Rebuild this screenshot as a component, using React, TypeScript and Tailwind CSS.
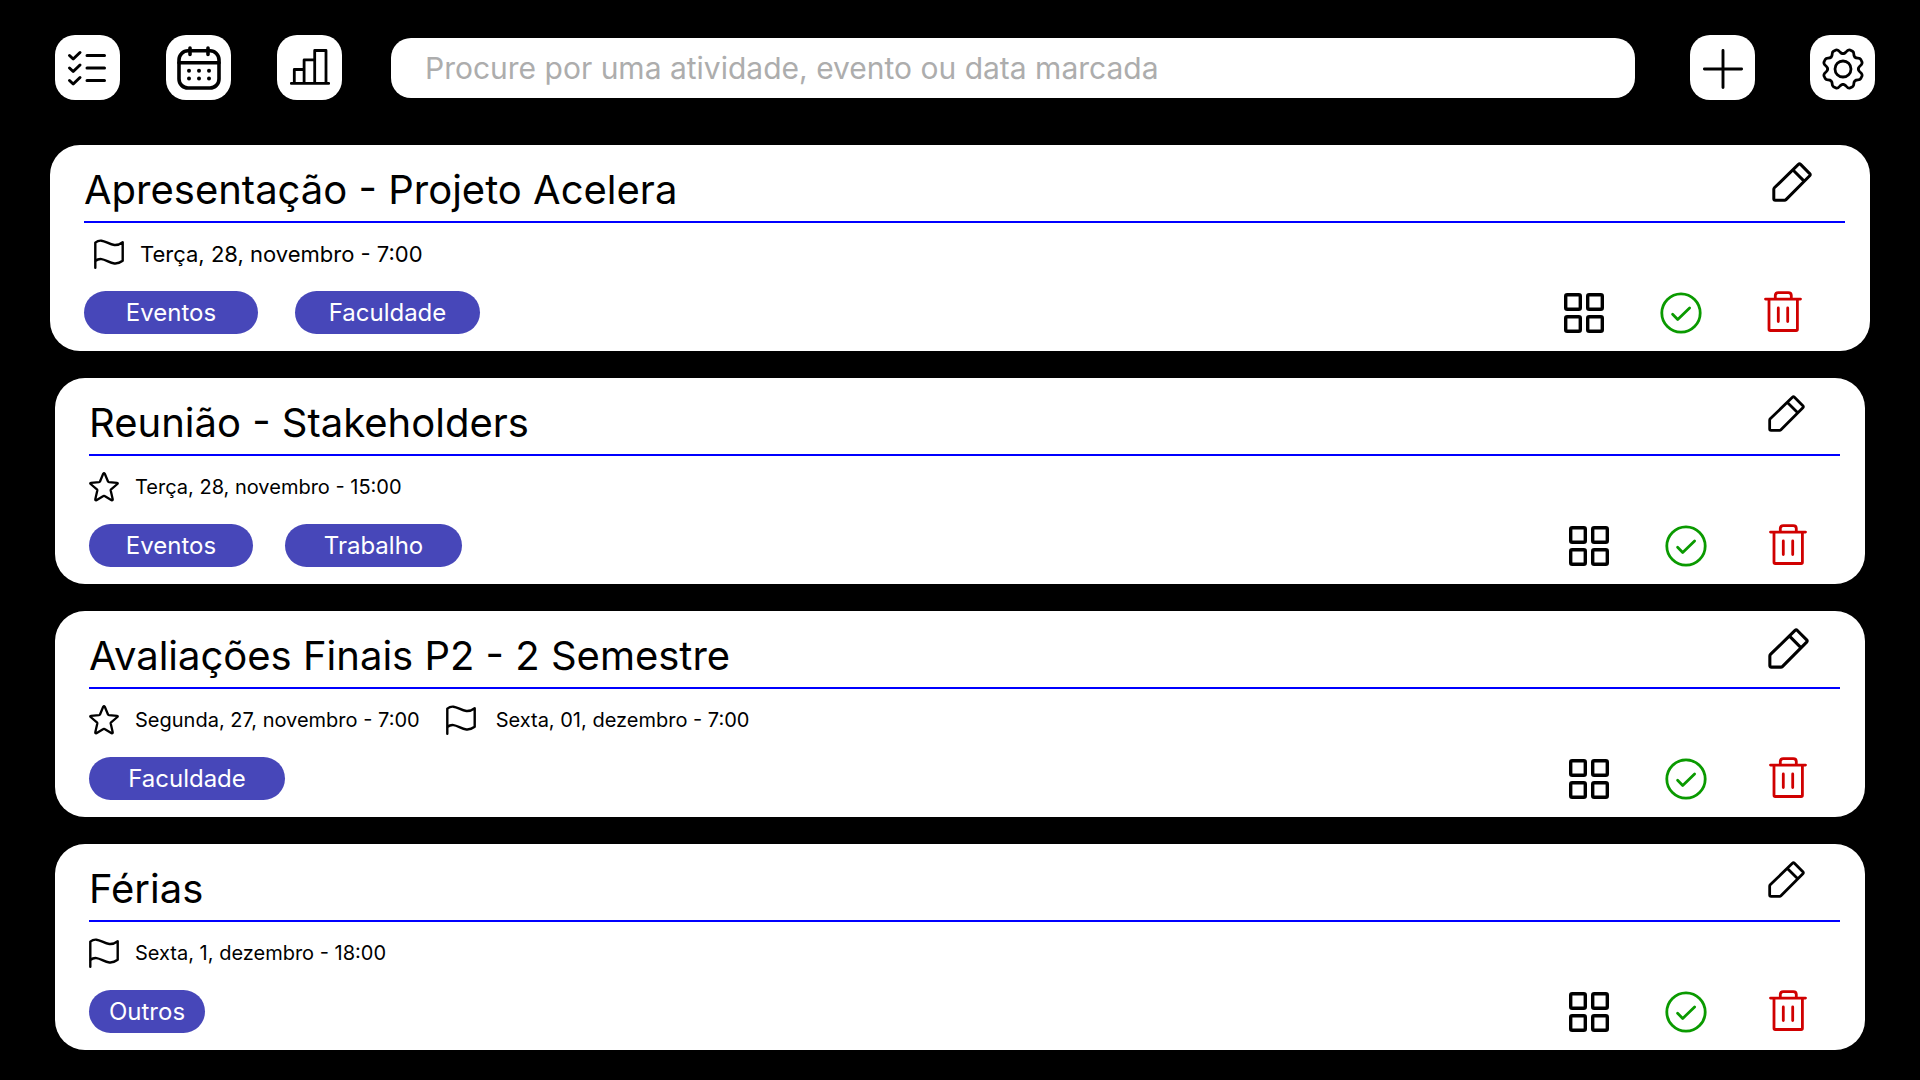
import React from "react";

type Tag = { label: string; width: string };
type Moment = { kind: "flag" | "star"; text: string; gap: string };
type Task = {
  title: string;
  moments: Moment[];
  tags: Tag[];
  cardClass: string;
  dateClass: string;
  momentsClass: string;
  tagsClass: string;
  pencilClass: string;
  actionsClass: string;
};

const tasks: Task[] = [
  {
    title: "Apresentação - Projeto Acelera",
    moments: [{ kind: "flag", text: "Terça, 28, novembro - 7:00", gap: "gap-4" }],
    tags: [
      { label: "Eventos", width: "w-[174px]" },
      { label: "Faculdade", width: "w-[185px]" },
    ],
    cardClass: "",
    dateClass: "text-[22px]",
    momentsClass: "pl-[10px]",
    tagsClass: "gap-[37px]",
    pencilClass: "size-[40px] mr-[33px]",
    actionsClass: "mr-[37px]",
  },
  {
    title: "Reunião - Stakeholders",
    moments: [{ kind: "star", text: "Terça, 28, novembro - 15:00", gap: "gap-4" }],
    tags: [
      { label: "Eventos", width: "w-[164px]" },
      { label: "Trabalho", width: "w-[177px]" },
    ],
    cardClass: "mx-[5px]",
    dateClass: "text-[20px]",
    momentsClass: "",
    tagsClass: "gap-8",
    pencilClass: "size-[37px] mr-[35px]",
    actionsClass: "mr-[27px]",
  },
  {
    title: "Avaliações Finais P2 - 2 Semestre",
    moments: [
      { kind: "star", text: "Segunda, 27, novembro - 7:00", gap: "gap-4" },
      { kind: "flag", text: "Sexta, 01, dezembro - 7:00", gap: "gap-5" },
    ],
    tags: [{ label: "Faculdade", width: "w-[196px]" }],
    cardClass: "mx-[5px]",
    dateClass: "text-[20px]",
    momentsClass: "",
    tagsClass: "gap-8",
    pencilClass: "size-[41px] mr-[31px]",
    actionsClass: "mr-[27px]",
  },
  {
    title: "Férias",
    moments: [{ kind: "flag", text: "Sexta, 1, dezembro - 18:00", gap: "gap-4" }],
    tags: [{ label: "Outros", width: "w-[116px]" }],
    cardClass: "mx-[5px]",
    dateClass: "text-[20px]",
    momentsClass: "",
    tagsClass: "gap-8",
    pencilClass: "size-[37px] mr-[35px]",
    actionsClass: "mr-[27px]",
  },
];

const stroke = {
  fill: "none",
  stroke: "currentColor",
  strokeLinecap: "round" as const,
  strokeLinejoin: "round" as const,
  "aria-hidden": true,
};

function ChecklistIcon() {
  return (
    <svg viewBox="0 0 65 65" className="size-full" strokeWidth={3} {...stroke}>
      <path d="M14.5 20.5l3.7 3.5 6.8-6.5M14.5 33l3.7 3.5 6.8-6.5M14.5 45.5l3.7 3.5 6.8-6.5" />
      <path d="M32 20.5h17.5M32 33h17.5M32 45.5h17.5" />
    </svg>
  );
}

function CalendarIcon() {
  return (
    <svg viewBox="0 0 65 65" className="size-full" strokeWidth={3.6} {...stroke}>
      <rect x="13" y="15.8" width="40" height="37.2" rx="9" />
      <path d="M13 27.7h40M24 13v6.5M42 13v6.5" />
      <g fill="currentColor" stroke="none">
        <circle cx="23" cy="35.7" r="2" />
        <circle cx="33" cy="35.7" r="2" />
        <circle cx="43" cy="35.7" r="2" />
        <circle cx="23" cy="43.4" r="2" />
        <circle cx="33" cy="43.4" r="2" />
        <circle cx="43" cy="43.4" r="2" />
      </g>
    </svg>
  );
}

function ChartIcon() {
  return (
    <svg viewBox="0 0 65 65" className="size-full" strokeWidth={2.8} {...stroke}>
      <path d="M14.3 48.4h37.4M17.3 48.4V34.5h9.8M27.1 48.4V24.9h10.6M37.7 48.4V15.5H49v32.9" />
    </svg>
  );
}

function PlusIcon() {
  return (
    <svg viewBox="0 0 65 65" className="size-full" strokeWidth={2.9} {...stroke}>
      <path d="M14.4 34h37.2M33 15.4v37.2" />
    </svg>
  );
}

const gearQuarter =
  "M0-15.3Q1.5-15.3 3-17Q5-19.6 7-19L9.5-17.8Q10.8-17 10.8-15Q10.8-10.8 15-10.8Q17-10.8 17.8-9.5L19-7Q19.6-5 17-3Q15.3-1.5 15.3 0";

function GearIcon() {
  return (
    <svg viewBox="0 0 65 65" className="size-full" strokeWidth={2.8} {...stroke}>
      <g transform="translate(33 34)">
        <circle r="8" />
        <path d={gearQuarter} />
        <path d={gearQuarter} transform="rotate(90)" />
        <path d={gearQuarter} transform="rotate(180)" />
        <path d={gearQuarter} transform="rotate(270)" />
      </g>
    </svg>
  );
}

function PencilIcon() {
  return (
    <svg viewBox="0 0 40 40" className="size-full" strokeWidth={3} {...stroke}>
      <path d="M1.8 27.2v9.5q0 1.5 1.5 1.5h9.3q.8 0 1.4-.6l23.7-23.8q1-1.1 0-2.2L28.6 2.4q-1.1-1-2.2 0L2.4 25.8q-.6.6-.6 1.4zM21 8l10.6 10.6" />
    </svg>
  );
}

function FlagIcon() {
  return (
    <svg viewBox="0 0 30 30" className="size-[30px] shrink-0" strokeWidth={2.4} {...stroke}>
      <path d="M1.3 28.8V3.6C10.5-3.6 17 12 28.7 3.2v18.6C17 30.5 10.5 14.8 1.3 22" />
    </svg>
  );
}

function StarIcon() {
  return (
    <svg viewBox="0 0 30 30" className="size-[30px] shrink-0" strokeWidth={2.3} {...stroke}>
      <path d="M15.8 1.8l3.2 7.7q.2.6.9.6l8.1.7q1.3.2.4 1.2l-6.3 5.4q-.5.5-.4 1.1l2 8.8q.1 1.4-1.1.9L15.6 24q-.6-.4-1.2 0l-7 4.2q-1.2.5-1.1-.9l2-8.8q.1-.6-.4-1.1L1.6 12q-.9-1 .4-1.2l8.1-.7q.7 0 .9-.6l3.2-7.7q.8-1.2 1.6 0z" />
    </svg>
  );
}

function GridIcon() {
  return (
    <svg viewBox="0 0 40 40" className="size-10" strokeWidth={3.4} {...stroke}>
      <rect x="1.7" y="1.7" width="14.6" height="14.6" rx="1.5" />
      <rect x="23.7" y="1.7" width="14.6" height="14.6" rx="1.5" />
      <rect x="1.7" y="23.7" width="14.6" height="14.6" rx="1.5" />
      <rect x="23.7" y="23.7" width="14.6" height="14.6" rx="1.5" />
    </svg>
  );
}

function DoneIcon() {
  return (
    <svg viewBox="0 0 42 42" className="size-[42px]" strokeWidth={2.8} {...stroke}>
      <circle cx="21" cy="21" r="19.2" />
      <path d="M12.6 22.3l5.1 5.1L29.6 16" />
    </svg>
  );
}

function TrashIcon() {
  return (
    <svg viewBox="0 0 38 44" className="h-11 w-[38px]" strokeWidth={2.8} {...stroke}>
      <path d="M1.5 8.1h35M5 8.1v30.2q0 1.2 1.2 1.2h26q1.2 0 1.2-1.2V8.1M11.3 8V4.6q0-3 3-3h10q3 0 3 3V8M14.3 17v13.6M23.7 17v13.6" />
    </svg>
  );
}

function Tile({ label, className, children }: { label: string; className?: string; children: React.ReactNode }) {
  return (
    <button
      type="button"
      aria-label={label}
      className={`size-[65px] shrink-0 cursor-pointer rounded-[20px] bg-white text-black ${className ?? ""}`}
    >
      {children}
    </button>
  );
}

function TaskCard({ task }: { task: Task }) {
  return (
    <article className={`rounded-[30px] bg-white pr-[25px] pb-[17px] pl-[34px] text-black ${task.cardClass}`}>
      <header className="flex items-start justify-between border-b-2 border-[#0000ff] pt-[17px] pb-[7px]">
        <h2 className="pt-1 text-[40px] leading-[48px]">{task.title}</h2>
        <button type="button" aria-label={`Editar ${task.title}`} className={`shrink-0 cursor-pointer ${task.pencilClass}`}>
          <PencilIcon />
        </button>
      </header>
      <div className={`mt-4 flex items-center gap-[26px] ${task.momentsClass}`}>
        {task.moments.map((m) => (
          <div key={m.text} className={`flex items-center ${m.gap}`}>
            {m.kind === "flag" ? <FlagIcon /> : <StarIcon />}
            <time className={`leading-[30px] ${task.dateClass}`}>{m.text}</time>
          </div>
        ))}
      </div>
      <footer className="mt-[22px] flex items-center justify-between">
        <ul className={`flex ${task.tagsClass}`}>
          {task.tags.map((t) => (
            <li
              key={t.label}
              className={`rounded-full bg-[#4747b9] text-center text-[24px] leading-[43px] text-white ${t.width}`}
            >
              {t.label}
            </li>
          ))}
        </ul>
        <div className={`flex h-[43px] items-center gap-14 ${task.actionsClass}`}>
          <button type="button" aria-label="Categorias" className="cursor-pointer">
            <GridIcon />
          </button>
          <button type="button" aria-label="Concluir" className="cursor-pointer text-[#0a9a00]">
            <DoneIcon />
          </button>
          <button type="button" aria-label="Excluir" className="flex w-[50px] cursor-pointer justify-center text-[#d00000]">
            <TrashIcon />
          </button>
        </div>
      </footer>
    </article>
  );
}

export default function App() {
  return (
    <div className="min-h-screen bg-black pb-[30px] font-['Inter',sans-serif]">
      <header className="flex items-center pt-[35px] pr-[45px] pl-[55px]">
        <nav className="flex gap-[46px]">
          <Tile label="Tarefas">
            <ChecklistIcon />
          </Tile>
          <Tile label="Calendário">
            <CalendarIcon />
          </Tile>
          <Tile label="Estatísticas">
            <ChartIcon />
          </Tile>
        </nav>
        <input
          type="search"
          aria-label="Procurar"
          placeholder="Procure por uma atividade, evento ou data marcada"
          className="mr-[55px] ml-[49px] h-[60px] min-w-0 flex-1 rounded-[20px] bg-white px-[34px] text-[30px] text-black outline-none placeholder:text-[#adadad]"
        />
        <Tile label="Adicionar">
          <PlusIcon />
        </Tile>
        <Tile label="Configurações" className="ml-[55px]">
          <GearIcon />
        </Tile>
      </header>
      <main className="mt-[45px] flex flex-col gap-[27px] px-[50px]">
        {tasks.map((task) => (
          <TaskCard key={task.title} task={task} />
        ))}
      </main>
    </div>
  );
}
